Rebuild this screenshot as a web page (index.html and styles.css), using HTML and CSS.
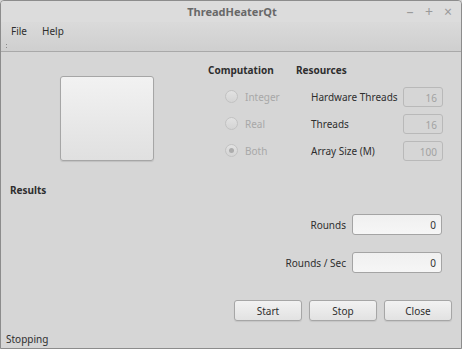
FILE: index.html
```html
<!DOCTYPE html>
<html lang="en">
<head>
    <meta charset="UTF-8">
    <title>ThreadHeaterQt</title>
    <link rel="stylesheet" href="styles.css">
</head>
<body>
    <div class="window">
        <div class="titlebar">
            <span class="title">ThreadHeaterQt</span>
            <div class="controls">
                <span class="ctl">&#8211;</span>
                <span class="ctl">+</span>
                <span class="ctl">&#215;</span>
            </div>
        </div>

        <div class="menubar">
            <span class="menu">File</span>
            <span class="menu">Help</span>
            <span class="grip"></span>
        </div>

        <div class="main">
            <div class="top">
                <button class="big-button" type="button"></button>

                <div class="options">
                    <div class="heading">Computation</div>
                    <div class="heading res-heading">Resources</div>
                    <div class="spacer"></div>

                    <label class="radio"><span class="dot"></span>Integer</label>
                    <div class="res-label">Hardware Threads</div>
                    <div class="spin">16</div>

                    <label class="radio"><span class="dot"></span>Real</label>
                    <div class="res-label">Threads</div>
                    <div class="spin">16</div>

                    <label class="radio"><span class="dot checked"></span>Both</label>
                    <div class="res-label">Array Size (M)</div>
                    <div class="spin">100</div>
                </div>
            </div>

            <div class="heading results-title">Results</div>

            <div class="results">
                <span class="result-label">Rounds</span>
                <div class="field">0</div>
                <span class="result-label">Rounds / Sec</span>
                <div class="field">0</div>
            </div>

            <div class="actions">
                <button class="push" type="button">Start</button>
                <button class="push" type="button">Stop</button>
                <button class="push" type="button">Close</button>
            </div>
        </div>

        <div class="statusbar">Stopping</div>
    </div>
</body>
</html>
```

FILE: styles.css
```css
body {
    margin: 0;
    font-family: 'Noto Sans', 'Open Sans', sans-serif;
    font-size: 10px;
    color: #333;
    background-color: #d6d6d6;
}

.window {
    width: 462px;
    height: 349px;
    box-sizing: border-box;
    border: 1px solid #8c8c8c;
    border-radius: 4px 4px 0 0;
    background-color: #d6d6d6;
    display: flex;
    flex-direction: column;
    overflow: hidden;
}

.titlebar {
    height: 21px;
    position: relative;
    display: flex;
    align-items: center;
    justify-content: center;
    background-color: #dcdcdc;
}

.title {
    font-size: 11px;
    font-weight: bold;
    color: #686868;
    margin-left: 2px;
}

.controls {
    position: absolute;
    right: 8px;
    top: 1px;
    display: flex;
    gap: 9px;
    color: #9a9a9a;
    font-size: 14px;
}

.ctl {
    width: 10px;
    text-align: center;
}

.menubar {
    height: 30px;
    box-sizing: border-box;
    padding: 0 0 0 10px;
    display: flex;
    align-items: flex-start;
    gap: 15px;
    position: relative;
    background: linear-gradient(#dadada, #cfcfcf);
    border-bottom: 1px solid #a9a9a9;
}

.menu {
    color: #2e2e2e;
    line-height: 16px;
    padding-top: 1px;
}

.grip {
    position: absolute;
    left: 5px;
    top: 22px;
    width: 1px;
    height: 4px;
    border-top: 1px dotted #8a8a8a;
    border-bottom: 1px dotted #8a8a8a;
    box-sizing: border-box;
}

.main {
    flex: 1;
    display: flex;
    flex-direction: column;
}

.top {
    display: flex;
    margin-top: 9px;
}

.big-button {
    width: 94px;
    height: 85px;
    margin: 15px 0 0 59px;
    border: 1px solid #a6a6a6;
    border-radius: 3px;
    background: linear-gradient(#f2f2f2, #e0e0e0);
    box-shadow: 0 1px 1px rgba(0, 0, 0, 0.1);
    padding: 0;
}

.options {
    margin-left: 54px;
    display: grid;
    grid-template-columns: 88px 107px 40px;
    grid-template-rows: 22px 27px 27px 27px;
    align-items: center;
}

.heading {
    font-weight: bold;
    color: #2e2e2e;
    line-height: 18px;
}

.options .heading {
    align-self: start;
}

.radio {
    display: flex;
    align-items: center;
    padding-left: 17px;
    color: #a8a8a8;
}

.dot {
    width: 11px;
    height: 11px;
    border: 1px solid #c2c2c2;
    border-radius: 50%;
    background: linear-gradient(#e2e2e2, #d4d4d4);
    margin-right: 7px;
    position: relative;
}

.dot.checked::after {
    content: "";
    position: absolute;
    left: 3px;
    top: 3px;
    width: 5px;
    height: 5px;
    border-radius: 50%;
    background-color: #acacac;
}

.res-label {
    padding-left: 15px;
    color: #2e2e2e;
}

.spin {
    height: 20px;
    box-sizing: border-box;
    border: 1px solid #b9b9b9;
    border-radius: 3px;
    color: #a2a2a2;
    text-align: right;
    padding: 2px 5px 0 0;
    line-height: 16px;
}

.results-title {
    margin: 18px 0 0 9px;
    line-height: 16px;
}

.results {
    display: grid;
    grid-template-columns: 1fr 90px;
    column-gap: 6px;
    row-gap: 17px;
    align-items: center;
    margin: 16px 19px 0 0;
    text-align: right;
}

.result-label {
    color: #2e2e2e;
}

.field {
    height: 21px;
    box-sizing: border-box;
    border: 1px solid #a4a4a4;
    border-radius: 3px;
    background: linear-gradient(#f0f0f0, #f6f6f6);
    padding: 2px 5px 0 0;
    line-height: 16px;
}

.actions {
    display: flex;
    justify-content: flex-end;
    gap: 7px;
    margin: 27px 9px 0 0;
}

.push {
    width: 68px;
    height: 21px;
    border: 1px solid #a6a6a6;
    border-radius: 3px;
    background: linear-gradient(#f2f2f2, #e2e2e2);
    box-shadow: 0 1px 1px rgba(0, 0, 0, 0.08);
    font-family: inherit;
    font-size: 10px;
    color: #2e2e2e;
    padding: 0;
}

.statusbar {
    height: 18px;
    padding-left: 5px;
    line-height: 18px;
    color: #2e2e2e;
}
```
